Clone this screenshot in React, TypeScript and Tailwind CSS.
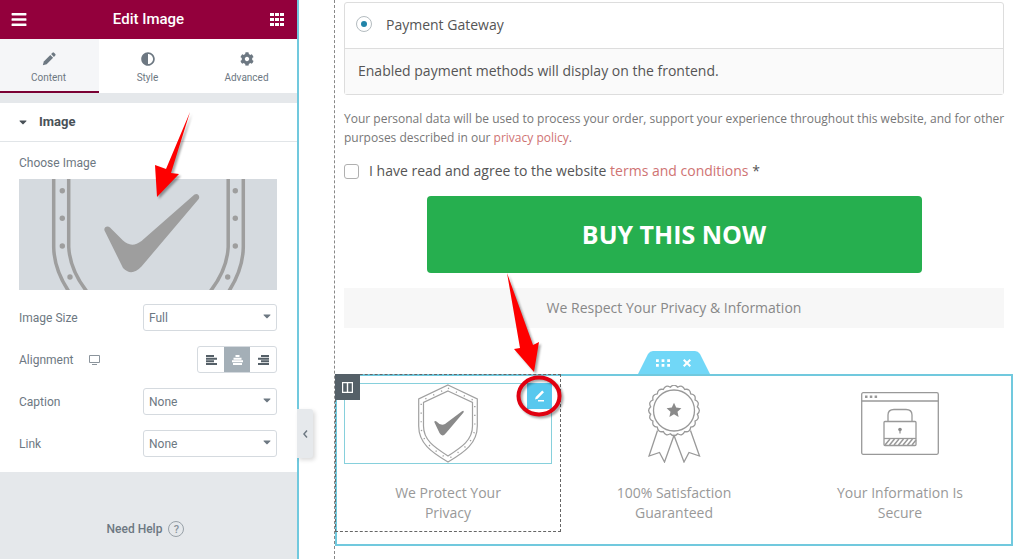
import type { ReactNode } from 'react'
import { FaAdjust, FaBars, FaCaretDown, FaCog } from 'react-icons/fa'

const tabs = [
  { label: 'Content', icon: PencilIcon, active: true },
  { label: 'Style', icon: FaAdjust, active: false },
  { label: 'Advanced', icon: FaCog, active: false },
]

const alignments = [
  { label: 'Left', d: 'M0 1h8M0 3.700h11M0 6.300h8M0 9h11', active: false },
  { label: 'Center', d: 'M3.500 1h4M1.500 3.700h8M0 6.300h11M1 9h9', active: true },
  { label: 'Right', d: 'M3 1h8M0 3.700h11M3 6.300h8M0 9h11', active: false },
]

const badges = [
  { text: 'We Protect Your Privacy', icon: <ShieldIcon />, selected: true },
  { text: '100% Satisfaction Guaranteed', icon: <RibbonIcon />, selected: false },
  { text: 'Your Information Is Secure', icon: <BrowserLockIcon />, selected: false },
]

export default function App() {
  return (
    <div className="flex min-h-screen bg-white">
      <Panel />
      <Preview />
    </div>
  )
}

function Panel() {
  return (
    <aside className="relative flex w-[299px] shrink-0 flex-col border-r-2 border-[#71c9de] bg-[#e5e8eb] font-['Roboto',sans-serif] text-[#6d7882]">
      <header className="flex h-[39px] items-center justify-between bg-[#93003c] px-[11px] text-white">
        <button type="button" aria-label="Menu">
          <FaBars className="h-[17px] w-4" />
        </button>
        <h1 className="text-[15px] font-medium">Edit Image</h1>
        <button type="button" aria-label="Widgets" className="mr-[2px]">
          <svg width="14" height="14" viewBox="0 0 14 14" fill="currentColor">
            {[0, 5, 10].map((y) => (
              <path key={y} d={`M0 ${y}h4v3h-4zM5 ${y}h4v3h-4zM10 ${y}h4v3h-4z`} />
            ))}
          </svg>
        </button>
      </header>

      <nav className="grid h-[54px] grid-cols-3 bg-white">
        {tabs.map(({ label, icon: Icon, active }) => (
          <button
            key={label}
            type="button"
            className={[
              'flex flex-col items-center gap-1 border-b-2 pt-[13px] pr-[2px] text-[10px] leading-4',
              active ? 'border-[#7a0033] bg-[#f5f6f8]' : 'border-transparent',
            ].join(' ')}
          >
            <Icon className="size-[14px]" />
            {label}
          </button>
        ))}
      </nav>

      <section className="mt-[10px] bg-white pb-[15px]">
        <h2 className="border-b border-[#e1e5e8]">
          <button
            type="button"
            className="flex h-[38px] w-full items-center gap-[10px] px-[17px] text-[13px] font-bold text-[#495157]"
          >
            <FaCaretDown className="size-3" />
            Image
          </button>
        </h2>
        <div className="pr-5 pl-[19px]">
          <p className="pt-[13px] text-[12px] leading-4">Choose Image</p>
          <div className="relative mt-2">
            <button type="button" aria-label="Choose Image" className="block w-full bg-[#d5dadf]">
              <MediaPreview />
            </button>
            {/* pointer to the image control */}
            <svg
              className="pointer-events-none absolute bottom-[92px] left-[132px] overflow-visible drop-shadow-[2px_2px_1px_rgba(0,0,0,0.35)]"
              width="42"
              height="86"
              viewBox="0 0 42 86"
            >
              <path d="M39 0 15 57 4 53 6 85 28 62 20 61Z" fill="#fe0000" />
            </svg>
          </div>

          <div className="mt-[14px] flex flex-col gap-[15px]">
            <SelectRow id="image-size" label="Image Size" value="Full" />
            <div className="flex h-[27px] items-center justify-between">
              <span className="flex items-center gap-4 text-[12px]">
                Alignment
                <svg width="11" height="10" viewBox="0 0 11 10" fill="none" stroke="#8b949c">
                  <path d="M.5.5h10v7h-10zM3 9.5h5" />
                </svg>
              </span>
              <div className="flex h-[27px] overflow-hidden rounded-[3px] border border-[#d5dadf]">
                {alignments.map((a) => (
                  <button
                    key={a.label}
                    type="button"
                    aria-label={a.label}
                    className={[
                      'grid w-[26px] place-items-center',
                      a.active ? 'bg-[#a4afb7] text-white' : 'text-[#556068]',
                    ].join(' ')}
                  >
                    <svg width="11" height="10" viewBox="0 0 11 10" stroke="currentColor" strokeWidth="1.900">
                      <path d={a.d} />
                    </svg>
                  </button>
                ))}
              </div>
            </div>
            <SelectRow id="caption" label="Caption" value="None" />
            <SelectRow id="link" label="Link" value="None" />
          </div>
        </div>
      </section>

      <a href="#help" className="mt-12 flex items-center justify-center gap-[6px] pr-[6px] text-[12px] font-medium">
        Need Help
        <span className="grid size-4 place-items-center rounded-full border border-[#98a1a8] text-[11px] text-[#89939b]">
          ?
        </span>
      </a>

      <button
        type="button"
        aria-label="Hide panel"
        className="absolute top-[409px] -right-4 grid h-[49px] w-4 place-items-center rounded-r-[3px] bg-[#e6e9ec] shadow-[2px_2px_4px_rgba(0,0,0,0.15)]"
      >
        <svg width="5" height="8" viewBox="0 0 5 8" fill="none" stroke="#6d7882" strokeWidth="1.5">
          <path d="M4 .5.9 4 4 7.5" />
        </svg>
      </button>
    </aside>
  )
}

function SelectRow({ id, label, value }: { id: string; label: string; value: string }) {
  return (
    <div className="flex h-[27px] items-center justify-between text-[12px]">
      <label htmlFor={id}>{label}</label>
      <div className="relative w-[134px]">
        <select
          id={id}
          className="block h-[27px] w-full appearance-none rounded-[3px] border border-[#d5dadf] bg-white px-[5px]"
        >
          <option>{value}</option>
        </select>
        <FaCaretDown className="pointer-events-none absolute top-[6px] right-1 size-3" />
      </div>
    </div>
  )
}

function Preview() {
  return (
    <main className="ml-[35px] min-w-0 flex-1 border-l border-dashed border-[#888] pt-[2px] pr-[11px] font-['Open_Sans',sans-serif] text-[#555]">
      <div className="px-[9px]">
        <div className="rounded-[3px] border border-[#ddd] text-[14px]">
          <label className="flex h-[45px] items-center gap-[14px] px-[11px] pb-[3px]">
            <input
              type="radio"
              name="payment"
              defaultChecked
              className="grid size-4 appearance-none place-items-center rounded-full border border-[#b4bcc0] before:size-[6px] before:rounded-full before:bg-[#2284a8]"
            />
            Payment Gateway
          </label>
          <p className="flex h-[46px] items-center border-t border-[#ddd] bg-[#fafafa] px-[13px] pb-[3px]">
            Enabled payment methods will display on the frontend.
          </p>
        </div>

        <p className="-mr-2 mt-[14px] text-[12px] leading-[19px] text-[#777]">
          Your personal data will be used to process your order, support your experience throughout this website, and
          for other purposes described in our{' '}
          <a href="#privacy" className="text-[#cf7373]">privacy policy</a>.
        </p>

        <div className="mt-3 flex items-center gap-[10px] text-[14px] leading-6">
          <input
            id="terms"
            type="checkbox"
            className="size-[15px] appearance-none rounded-[3px] border border-[#b0b0b0] bg-white"
          />
          <label htmlFor="terms">
            I have read and agree to the website{' '}
            <a href="#terms" className="text-[#cf7373]">terms and conditions</a> *
          </label>
        </div>

        <button
          type="button"
          className="mx-auto mt-[13px] block h-[77px] w-3/4 rounded-[4px] bg-[#26af4f] text-[25px] font-bold text-white"
        >
          BUY THIS NOW
        </button>

        <p className="mt-[15px] bg-[#f7f7f7] text-center text-[14px] leading-[40px] text-[#888]">
          We Respect Your Privacy &amp; Information
        </p>
      </div>

      <section className="relative mt-[46px] pb-[14px] inset-ring-2 inset-ring-[#71c9de]">
        <div className="absolute bottom-full left-1/2 -translate-x-1/2">
          <SectionHandle />
        </div>
        <div className="grid grid-cols-3">
          {badges.map((b) => (
            <Column key={b.text} text={b.text} selected={b.selected}>
              {b.icon}
            </Column>
          ))}
        </div>
      </section>
    </main>
  )
}

function Column({ text, selected, children }: { text: string; selected: boolean; children: ReactNode }) {
  return (
    <div className={['relative border border-dashed p-2', selected ? 'border-[#666]' : 'border-transparent'].join(' ')}>
      <div
        className={[
          'relative grid h-[81px] place-items-center border',
          selected ? 'border-[#86d0dc]' : 'border-transparent',
        ].join(' ')}
      >
        {children}
        {selected && <EditHandle />}
      </div>
      <p className="mx-auto mt-[19px] max-w-[140px] text-center text-[14px] leading-5 text-[#999]">{text}</p>
      {selected && (
        <button
          type="button"
          aria-label="Edit column"
          className="absolute -top-px -left-px grid h-[26px] w-[25px] place-items-center bg-[#556068]"
        >
          <svg width="11" height="11" viewBox="0 0 11 11" fill="none" stroke="#fff">
            <path d="M.5.5h10v10h-10zM5.5 0v11" strokeWidth="1.4" />
          </svg>
        </button>
      )}
    </div>
  )
}

function EditHandle() {
  return (
    <>
      <button
        type="button"
        aria-label="Edit image"
        className="absolute -top-px -right-px grid h-[26px] w-[25px] place-items-center bg-[#58c8ee]"
      >
        <svg width="11" height="12" viewBox="0 0 11 12" fill="#fff">
          <path d="M8.2.4 10 2.2 3.6 8.8 1 9.6 1.7 7zM4 10h6v1.4H4z" />
        </svg>
      </button>
      {/* circle and arrow marking the edit button */}
      <svg
        className="pointer-events-none absolute -top-[111px] -right-[11px] overflow-visible drop-shadow-[2px_2px_1px_rgba(0,0,0,0.35)]"
        width="56"
        height="145"
        viewBox="0 0 56 145"
      >
        <path d="M1 0 14 75 8 76 28 99 33 69 27 72Z" fill="#fe0000" />
        <ellipse cx="33" cy="123" rx="20.5" ry="18.5" fill="none" stroke="#e00010" strokeWidth="4" />
      </svg>
    </>
  )
}

function SectionHandle() {
  return (
    <div className="relative h-[23px] w-[72px]">
      <svg className="absolute inset-0" width="72" height="23" viewBox="0 0 72 23">
        <path d="M0 23 10 3Q12 0 15 0H57Q60 0 62 3L72 23Z" fill="#71d7f7" />
      </svg>
      <div className="relative flex h-full items-center justify-center gap-[13px] pr-[2px] text-white">
        <button type="button" aria-label="Edit section">
          <svg className="block" width="14" height="8" viewBox="0 0 15 8" fill="currentColor">
            <path d="M0 0h3v3H0zM6 0h3v3H6zM12 0h3v3h-3zM0 5h3v3H0zM6 5h3v3H6zM12 5h3v3h-3z" />
          </svg>
        </button>
        <button type="button" aria-label="Delete section">
          <svg className="block" width="8" height="8" viewBox="0 0 8 8" stroke="currentColor" strokeWidth="2">
            <path d="M.7.7l6.6 6.6M7.3.7.7 7.3" />
          </svg>
        </button>
      </div>
    </div>
  )
}

function PencilIcon({ className }: { className?: string }) {
  return (
    <svg className={className} viewBox="0 0 14 14" fill="currentColor">
      <path d="M8.3 2.900 11.100 5.700 4.600 12.200.8 13.200 1.800 9.400Z" />
      <path d="M9.100 2.100 10.500.7Q11.200 0 12 .7L13.300 2Q14 2.800 13.300 3.500L11.900 4.900Z" />
    </svg>
  )
}

function MediaPreview() {
  return (
    <svg className="block h-[111px] w-full" viewBox="0 0 258 111" preserveAspectRatio="xMidYMid slice">
      <g fill="none" stroke="#9e9e9e" strokeWidth="3.5">
        <path d="M34.7 0V68Q35 90 49.5 112M49.7 0V68Q51 91 67.5 112" />
        <path d="M224.3 0V68Q224 90 210 112M209.2 0V68Q208 91 191.5 112" />
      </g>
      <g fill="#9e9e9e">
        {[11.7, 39.3, 67].map((y) => (
          <g key={y}>
            <circle cx="43.3" cy={y} r="2.7" />
            <circle cx="216.3" cy={y} r="2.7" />
          </g>
        ))}
        <circle cx="51" cy="98" r="2.7" />
        <circle cx="208.7" cy="98" r="2.7" />
        <path d="M85.5 51.5C84.5 48 88.500 46 91 48.500L104 61.500Q112.500 69.500 122.500 62L175.500 15.500C178.500 13.500 181.500 17 179.700 20L122.500 87.500Q112.500 98 104 89Z" />
      </g>
    </svg>
  )
}

function ShieldIcon() {
  return (
    <svg width="60" height="79" viewBox="0 0 60 79" fill="none" stroke="#a0a0a0" strokeWidth="1.2">
      <path d="M30 1 59.300 15V42C59.300 59 47 68 30 78 13 68 .7 59 .7 42V15Z" />
      <path d="M30 7 54.500 18.500V42C54.500 56 44 63 30 72 16 63 5.500 56 5.500 42V18.500Z" />
      <path
        d="M30 4.200 56.800 16.800V42C56.800 57.500 46 65 30 75 14 65 3.200 57.500 3.200 42V16.800Z"
        strokeDasharray="1.2 7.500"
        strokeWidth="1.4"
      />
      <path
        d="M16.500 38.500C16 36.700 17.500 36.500 18.500 37.500Q23 42.500 27 40L44 27.200Q46.500 26 45.500 28.500L28.500 48.500Q24.500 54 21.500 49Z"
        fill="#8a8a8a"
        stroke="none"
      />
    </svg>
  )
}

// scalloped edge of the rosette
const scallop = Array.from({ length: 20 }, (_, i) => {
  const at = (deg: number, r: number) => {
    const a = (deg * Math.PI) / 180
    return `${(26 + r * Math.sin(a)).toFixed(2)} ${(25.5 - r * Math.cos(a)).toFixed(2)}`
  }
  return `${i === 0 ? `M${at(-9, 23.6)}` : ''}Q${at(i * 18, 27.4)} ${at(i * 18 + 9, 23.6)}`
}).join('')

function RibbonIcon() {
  return (
    <svg width="53" height="78" viewBox="0 0 53 78" fill="none" stroke="#999" strokeWidth="1.300">
      <path d={scallop + 'Z'} />
      <circle cx="26" cy="25.500" r="20.500" />
      <path d="M9.500 45.500 1 71 11.500 67.500 16.500 77 26 50.500 36 77 41 67.500 51.500 71 42.500 45.500" />
      <path
        d="m26 17.800 2.200 4.800 5.200.6-3.900 3.500 1.100 5.200-4.600-2.600-4.600 2.600 1.100-5.200-3.900-3.500 5.200-.6z"
        fill="#8a8a8a"
        stroke="none"
      />
    </svg>
  )
}

function BrowserLockIcon() {
  return (
    <svg width="78" height="63" viewBox="0 0 78 63" fill="none" stroke="#999" strokeWidth="1.300">
      <rect x=".7" y=".7" width="76.600" height="61.600" rx="1.500" />
      <path d="M.7 9h76.600" />
      <path d="M4 4.800h2.500M8.800 4.800h2.500M13.600 4.800h2.500" strokeWidth="2.400" />
      <path d="M27 29.500V23Q27 17.500 33 17.500H45Q51 17.500 51 23V29.500" />
      <rect x="23" y="29.500" width="32" height="24" rx="1" />
      <path d="M23 46.500h32" />
      <path d="m24 53 5-6M28.500 53l5-6M33 53l5-6M37.500 53l5-6M42 53l5-6M46.500 53l5-6M51 53l4-5" strokeWidth="1.500" />
      <path d="M39 38v3.500" />
      <circle cx="39" cy="37.500" r="1.800" fill="#8a8a8a" stroke="none" />
    </svg>
  )
}
